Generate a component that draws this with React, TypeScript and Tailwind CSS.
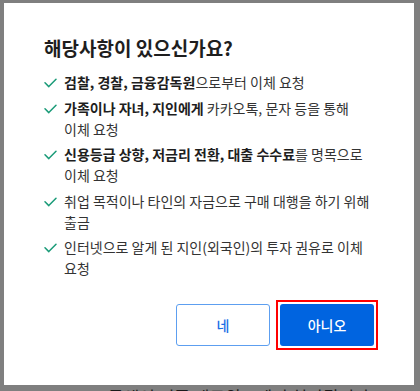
import React from "react";

const Check = () => (
  <svg width="13" height="10" viewBox="0 0 13 10" className="shrink-0 mt-[6px]" fill="none">
    <polyline points="1,4.8 4.8,8.6 12,1.2" stroke="#1a9b78" strokeWidth="1.5" strokeLinecap="round" strokeLinejoin="round" />
  </svg>
);

const items: { b: string; n: string }[] = [
  { b: "검찰, 경찰, 금융감독원", n: "으로부터 이체 요청" },
  { b: "가족이나 자녀, 지인에게", n: " 카카오톡, 문자 등을 통해 이체 요청" },
  { b: "신용등급 상향, 저금리 전환, 대출 수수료", n: "를 명목으로 이체 요청" },
  { b: "", n: "취업 목적이나 타인의 자금으로 구매 대행을 하기 위해 출금" },
  { b: "", n: "인터넷으로 알게 된 지인(외국인)의 투자 권유로 이체 요청" },
];

export default function App() {
  return (
    <div
      className="w-[420px] h-[391px] overflow-hidden bg-[#7f7f7f] pt-[3px]"
      style={{ fontFamily: '"Noto Sans CJK KR", "Noto Sans", sans-serif' }}
    >
      <div className="ml-[4px] w-[410px] h-[382px] bg-white px-[40px] pt-[32px] flex flex-col">
        <h2 className="text-[19px] leading-[26px] font-bold text-[#1e1e1e]">
          해당사항이 있으신가요?
        </h2>
        <ul className="mt-[11px] flex flex-col gap-[4.5px]">
          {items.map((it, i) => (
            <li key={i} className="flex gap-[7px] text-[14px] leading-[21px] text-[#333] break-keep">
              <Check />
              <span className="flex-1">
                {it.b && <b className="font-bold text-[#1e1e1e]">{it.b}</b>}
                {it.n}
              </span>
            </li>
          ))}
        </ul>
        <div className="mt-[25px] flex justify-end gap-[10px]">
          <button className="w-[94px] h-[42px] rounded-[3px] border border-[#5d9ff0] bg-white text-[14px] font-medium text-[#1a6ee6]">
            네
          </button>
          <div className="-m-[4px] border-2 border-[#ff0000] p-[2px]">
            <button className="block w-[94px] h-[42px] rounded-[3px] bg-[#0064e0] text-[14px] font-medium text-white">
              아니오
            </button>
          </div>
        </div>
      </div>
      <div className="ml-[108px] mt-[2px] text-[17px] leading-[20px] text-[#1a1a1a]">
        금액이 리플 네트워크에서 처리됩니다
      </div>
    </div>
  );
}
